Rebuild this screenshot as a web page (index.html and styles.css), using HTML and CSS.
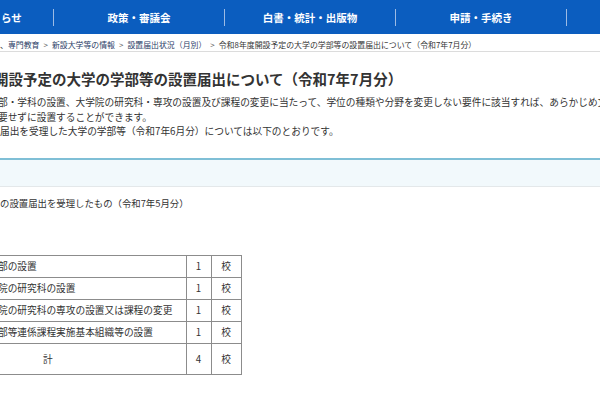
FILE: index.html
```html
<!DOCTYPE html>
<html lang="ja">
<head>
<meta charset="utf-8">
<link rel="stylesheet" href="styles.css">
</head>
<body>
<nav class="gnav">
  <div class="gnav-first">らせ</div>
  <span class="sep"></span>
  <div class="gnav-item">政策・審議会</div>
  <span class="sep"></span>
  <div class="gnav-item">白書・統計・出版物</div>
  <span class="sep"></span>
  <div class="gnav-item">申請・手続き</div>
  <span class="sep"></span>
  <div class="gnav-last"></div>
</nav>
<div class="crumbs">、<a class="crumb-link">専門教育</a><span class="gt">&gt;</span><a class="crumb-link">新設大学等の情報</a><span class="gt">&gt;</span><a class="crumb-link">設置届出状況（月別）</a><span class="gt">&gt;</span>令和8年度開設予定の大学の学部等の設置届出について（令和7年7月分）</div>
<main class="content">
  <h1 class="title"><span class="cut-title">開設予定の大学の学部等の設置届出について（令和7年7月分）</span></h1>
  <div class="lead">
    <p class="line"><span class="cut-a">部・学科の設置、大学院の研究科・専攻の設置及び課程の変更に当たって、学位の種類や分野を変更しない要件に該当すれば、あらかじめ文</span></p>
    <p class="line"><span class="cut-b">要せずに設置することができます。</span></p>
    <p class="line">届出を受理した大学の学部等（令和7年6月分）については以下のとおりです。</p>
  </div>
  <div class="band"></div>
  <p class="sub">の設置届出を受理したもの（令和7年5月分）</p>
  <table class="tbl">
    <colgroup><col class="c-name"><col class="c-num"><col class="c-unit"></colgroup>
    <tr><td class="name"><span class="cut-a">部の設置</span></td><td class="num">1</td><td class="unit">校</td></tr>
    <tr><td class="name"><span class="cut-a">院の研究科の設置</span></td><td class="num">1</td><td class="unit">校</td></tr>
    <tr><td class="name"><span class="cut-a">院の研究科の専攻の設置又は課程の変更</span></td><td class="num">1</td><td class="unit">校</td></tr>
    <tr><td class="name"><span class="cut-a">部等連係課程実施基本組織等の設置</span></td><td class="num">1</td><td class="unit">校</td></tr>
    <tr class="total"><td class="name total-name">計</td><td class="num">4</td><td class="unit">校</td></tr>
  </table>
</main>
</body>
</html>
```

FILE: styles.css
```css
html, body {
  margin: 0;
  padding: 0;
  background: #ffffff;
  overflow: hidden;
}
body {
  width: 600px;
  height: 400px;
  font-family: "Noto Sans CJK JP", "Noto Sans", sans-serif;
  color: #333333;
}
.gnav {
  height: 34px;
  background: #0b5dbf;
  display: flex;
  align-items: center;
  color: #ffffff;
  font-weight: bold;
  font-size: 10.5px;
  white-space: nowrap;
}
.gnav-first {
  width: 53px;
  padding-left: 1px;
  box-sizing: border-box;
}
.gnav-item {
  width: 170px;
  text-align: center;
}
.gnav-last {
  flex: 1;
}
.sep {
  width: 1px;
  height: 17px;
  background: #9dbbe4;
}
.crumbs {
  height: 18px;
  box-sizing: border-box;
  padding-top: 4px;
  line-height: 14px;
  font-size: 7.9px;
  white-space: nowrap;
  border-bottom: 1px solid #dcdcdc;
  color: #333333;
}
.crumb-link {
  color: #2a3d66;
}
.gt {
  margin: 0 4px;
  color: #555555;
}
.content {
  display: block;
}
.title {
  margin: 17px 0 0 0;
  font-size: 14.5px;
  line-height: 20px;
  font-weight: bold;
  white-space: nowrap;
  color: #333333;
}
.cut-title {
  margin-left: -6px;
}
.lead {
  padding-top: 6px;
}
.line {
  margin: 0;
  font-size: 9.7px;
  line-height: 14.5px;
  white-space: nowrap;
}
.cut-a {
  margin-left: -2px;
}
.cut-b {
  margin-left: -2px;
}
.band {
  margin-top: 19px;
  height: 26px;
  border-top: 2px solid #7fbfd6;
  border-bottom: 1px solid #e4e8ea;
  background: #f2f9fc;
}
.sub {
  margin: 9px 0 0 0;
  font-size: 9.4px;
  line-height: 14px;
  white-space: nowrap;
}
.tbl {
  margin-top: 45px;
  border-collapse: collapse;
  table-layout: fixed;
  width: 241px;
  font-size: 9.7px;
}
.c-name {
  width: 186px;
}
.c-num {
  width: 25px;
}
.c-unit {
  width: 30px;
}
.tbl td {
  box-sizing: border-box;
  border: 1px solid #8c8c8c;
  height: 22px;
  padding: 0;
  white-space: nowrap;
  overflow: visible;
}
.tbl .name {
  border-left: none;
}
.tbl .num,
.tbl .unit {
  text-align: center;
}
.tbl .total td {
  height: 31px;
}
.tbl .total-name {
  padding-left: 43px;
}
```
